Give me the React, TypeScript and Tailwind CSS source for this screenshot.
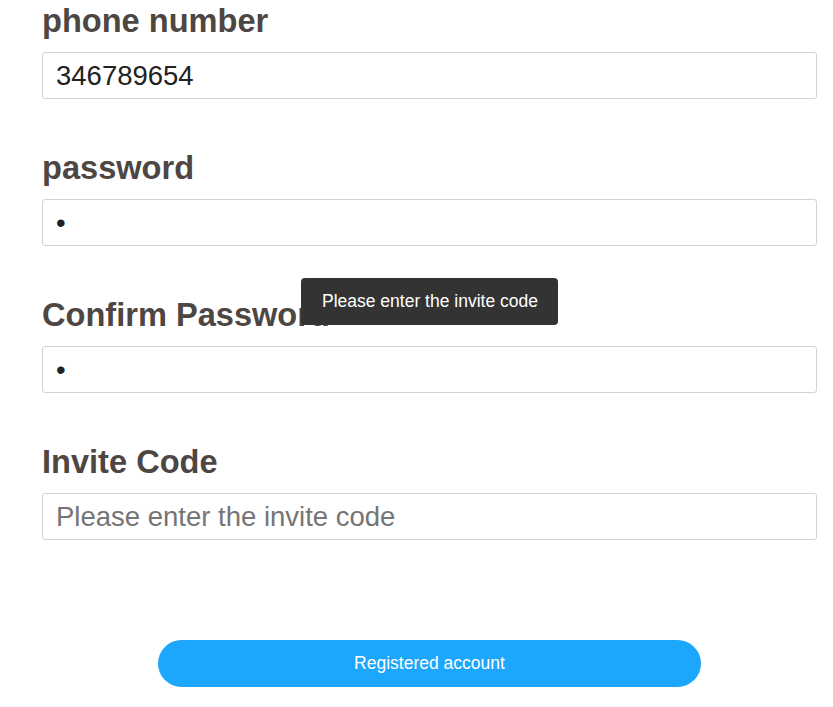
import React from "react";

const fields = [
  { label: "phone number", type: "text", value: "346789654", placeholder: "" },
  { label: "password", type: "password", value: "a", placeholder: "" },
  { label: "Confirm Password", type: "password", value: "a", placeholder: "" },
  { label: "Invite Code", type: "text", value: "", placeholder: "Please enter the invite code" },
];

export default function App() {
  return (
    <div className="relative min-h-[707px] bg-white font-['Liberation_Sans',Arial,sans-serif]">
      <div className="w-[817px] pl-[42px]">
        {fields.map((f, i) => (
          <div key={i} className={i < fields.length - 1 ? "mb-[48px]" : ""}>
            <div className="h-[42px] text-[32.6px] font-bold leading-[42px] text-[#4d4642]">{f.label}</div>
            <input
              type={f.type}
              defaultValue={f.value}
              placeholder={f.placeholder}
              className="mt-[10px] block h-[47px] w-full rounded-[3px] border border-[#d2d2d2] bg-white px-[13px] text-[27.5px] text-[#222] outline-none placeholder:text-[#757575]"
            />
          </div>
        ))}
        <div className="mt-[100px] flex justify-center">
          <button className="h-[47px] w-[70%] rounded-full bg-[#1ca7fd] text-[17.5px] text-white">
            Registered account
          </button>
        </div>
      </div>
      <div className="absolute left-[301px] top-[278px] flex h-[47px] w-[257px] items-center rounded-[4px] bg-[#333333] pl-[21px] text-[17.5px] text-white">
        Please enter the invite code
      </div>
    </div>
  );
}
